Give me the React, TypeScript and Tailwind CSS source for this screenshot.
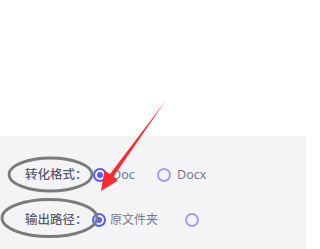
import React from "react";

const font = { fontFamily: '"Noto Sans", "Noto Sans CJK SC", sans-serif' };

const Radio = ({ checked }: { checked?: boolean }) => (
  <span
    className={`flex h-[14px] w-[14px] shrink-0 items-center justify-center rounded-full border-2 ${
      checked ? "border-[#5a5cf5]" : "border-[#a4a2e2]"
    }`}
  >
    {checked && <span className="h-[6px] w-[6px] rounded-full bg-[#5a5cf5]" />}
  </span>
);

export default function App() {
  return (
    <div className="relative h-[249px] w-[306px] overflow-hidden bg-white" style={font}>
      <div className="h-[136px] bg-white" />
      <div className="flex h-[113px] flex-col gap-[23px] bg-[#f4f4f7] pt-[28px] text-[12px]">
        {/* 转化格式 */}
        <div className="flex h-[22px] items-center pl-[25px]">
          <span className="w-[68px] text-[12.5px] font-medium text-[#5b5e6d]">转化格式：</span>
          <div className="flex w-[64px] items-center gap-[5px]">
            <Radio checked />
            <span className="text-[12.5px] text-[#76788a]">Doc</span>
          </div>
          <div className="flex items-center gap-[6px]">
            <Radio />
            <span className="text-[12.5px] text-[#76788a]">Docx</span>
          </div>
        </div>

        {/* 输出路径 */}
        <div className="flex h-[22px] items-center pl-[25px]">
          <span className="w-[67px] text-[12.5px] font-medium text-[#5b5e6d]">输出路径：</span>
          <div className="flex w-[93px] items-center gap-[4px]">
            <Radio checked />
            <span className="text-[#76788a]">原文件夹</span>
          </div>
          <Radio />
        </div>
      </div>

      {/* annotations */}
      <svg className="pointer-events-none absolute left-0 top-0" width="306" height="249" viewBox="0 0 306 249">
        <ellipse cx="50.5" cy="174.5" rx="41.5" ry="16.5" fill="none" stroke="#7b7b7b" strokeWidth="2.8" />
        <ellipse cx="49.5" cy="218" rx="47.5" ry="18.5" fill="none" stroke="#7b7b7b" strokeWidth="2.8" />
        <polygon
          points="165.5,101 113.5,176.5 118,180.5 101,191 104.5,170.5 110,174"
          fill="#fb2a2f"
        />
      </svg>
    </div>
  );
}
